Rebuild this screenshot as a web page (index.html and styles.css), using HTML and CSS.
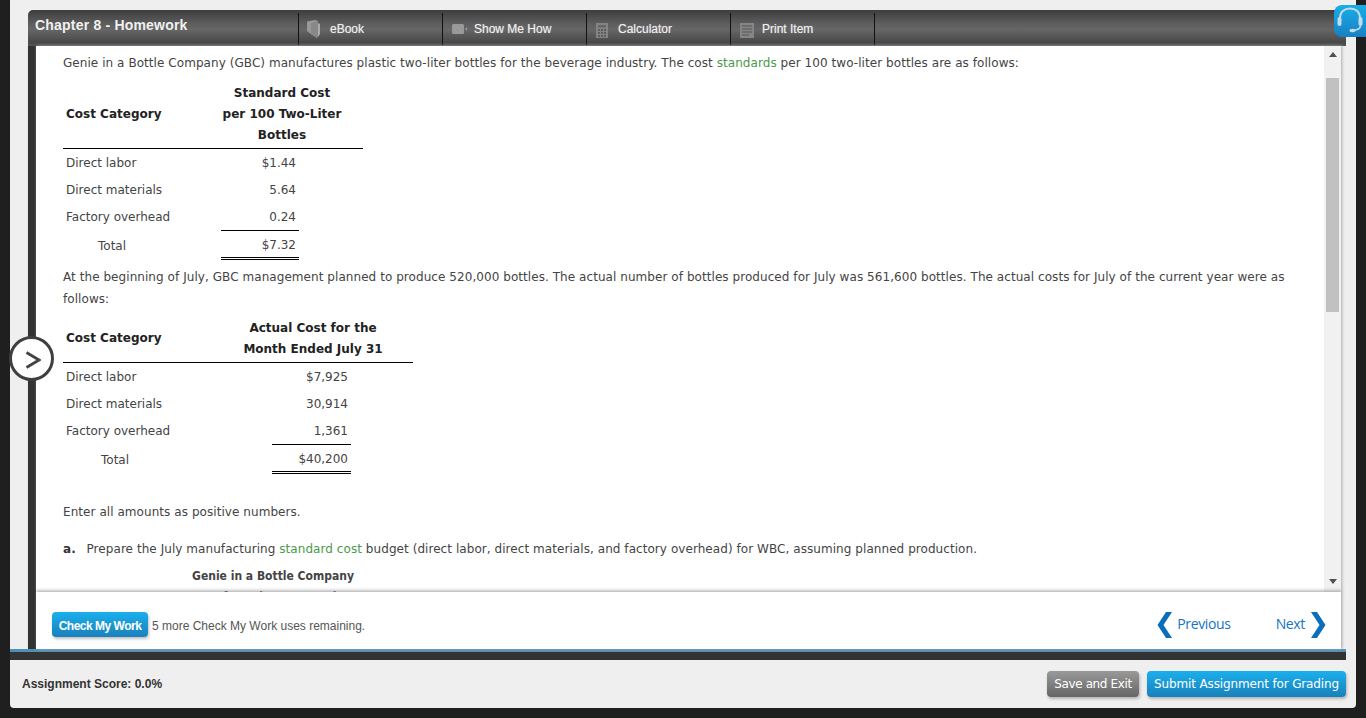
FILE: index.html
```html
<!DOCTYPE html>
<html lang="en">
<head>
<meta charset="utf-8">
<title>Chapter 8 - Homework</title>
<link rel="stylesheet" href="styles.css">
</head>
<body>
<div class="shell">
  <div class="window">
    <header class="header">
      <h1 class="title">Chapter 8 - Homework</h1>
      <nav class="tabs">
        <a class="tab"><svg class="ico" width="18" height="20" viewBox="0 0 18 20"><path d="M2 2.500 L10 1 L13 2 L13 16 L12 19 L6 15 L2 12 Z" fill="#999"/><path d="M6 4 L13 2 L13 16 L12 19 L6 15 Z" fill="#888"/><path d="M13 4 L15 5 L15 15 L13 18 Z" fill="#aaa"/></svg><span>eBook</span></a>
        <a class="tab"><svg class="ico" width="18" height="20" viewBox="0 0 18 20"><rect x="3" y="5" width="12" height="10" rx="1.500" fill="#999"/><path d="M16 10 L18 8.200 L18 11.800 Z" fill="#999"/></svg><span>Show Me How</span></a>
        <a class="tab"><svg class="ico" width="18" height="20" viewBox="0 0 18 20"><rect x="3" y="4" width="12" height="15" fill="#848484"/><rect x="5" y="6" width="8" height="2.500" fill="#666"/><path d="M5 10h2v2H5zM8 10h2v2H8zM11 10h2v2h-2zM5 13h2v2H5zM8 13h2v2H8zM11 13h2v2h-2zM5 16h2v2H5zM8 16h2v2H8zM11 16h2v2h-2z" fill="#5e5e5e"/></svg><span>Calculator</span></a>
        <a class="tab"><svg class="ico" width="18" height="20" viewBox="0 0 18 20"><rect x="3" y="4" width="14" height="15" fill="#858585"/><path d="M5 6.500h10v1H5zM5 9.500h10v1H5zM5 12.500h10v1H5zM5 15.500h7v1H5z" fill="#555"/></svg><span>Print Item</span></a>
      </nav>
    </header>
    <div class="stage">
      <div class="stripe"></div>
      <div class="main">
        <div class="pane">
          <div class="content">
            <p class="para">Genie in a Bottle Company (GBC) manufactures plastic two-liter bottles for the beverage industry. The cost <a class="term">standards</a> per 100 two-liter bottles are as follows:</p>
            <table class="fin fin-a">
              <colgroup><col class="a1"><col class="a2"><col class="a3"></colgroup>
              <thead><tr><th class="lbl">Cost Category</th><th colspan="2" class="hd hd-a">Standard Cost<br>per 100 Two-Liter<br>Bottles</th></tr></thead>
              <tbody>
                <tr><td>Direct labor</td><td class="num">$1.44</td><td></td></tr>
                <tr><td>Direct materials</td><td class="num">5.64</td><td></td></tr>
                <tr class="last"><td>Factory overhead</td><td class="num under">0.24</td><td></td></tr>
                <tr class="total"><td class="tot-a">Total</td><td class="num dbl">$7.32</td><td></td></tr>
              </tbody>
            </table>
            <p class="para para-b">At the beginning of July, GBC management planned to produce 520,000 bottles. The actual number of bottles produced for July was 561,600 bottles. The actual costs for July of the current year were as follows:</p>
            <table class="fin fin-b">
              <colgroup><col class="b1"><col class="b2"><col class="b3"><col class="b4"></colgroup>
              <thead><tr><th class="lbl">Cost Category</th><th colspan="3" class="hd hd-b">Actual Cost for the<br>Month Ended July 31</th></tr></thead>
              <tbody>
                <tr><td colspan="2">Direct labor</td><td class="num">$7,925</td><td></td></tr>
                <tr><td colspan="2">Direct materials</td><td class="num">30,914</td><td></td></tr>
                <tr class="last"><td colspan="2">Factory overhead</td><td class="num under">1,361</td><td></td></tr>
                <tr class="total"><td colspan="2" class="tot-b">Total</td><td class="num dbl">$40,200</td><td></td></tr>
              </tbody>
            </table>
            <p class="para para-c">Enter all amounts as positive numbers.</p>
            <p class="para para-d"><b class="mark">a.</b>&nbsp; Prepare the July manufacturing <a class="term">standard cost</a> budget (direct labor, direct materials, and factory overhead) for WBC, assuming planned production.</p>
            <div class="budget">Genie in a Bottle Company<br>Manufacturing Cost Budget</div>
          </div>
          <div class="scrollbar">
            <span class="arrow up"></span>
            <div class="track"><div class="thumb"></div></div>
            <span class="arrow down"></span>
          </div>
        </div>
        <div class="footer">
          <button class="btn btn-check">Check My Work</button>
          <span class="remain">5 more Check My Work uses remaining.</span>
          <div class="pager">
            <a class="page"><svg width="16" height="26" viewBox="0 0 16 26"><path d="M15 0 L9 0 L0.500 13 L9 26 L15 26 L6.500 13 Z" fill="#0a6ebd"/></svg><span>Previous</span></a>
            <a class="page page-next"><span>Next</span><svg width="16" height="26" viewBox="0 0 16 26"><path d="M1 0 L7 0 L15.500 13 L7 26 L1 26 L9.500 13 Z" fill="#0a6ebd"/></svg></a>
          </div>
        </div>
      </div>
    </div>
    <div class="rule"></div>
  </div>
  <div class="scorebar">
    <span class="score">Assignment Score: 0.0%</span>
    <div class="actions">
      <button class="btn btn-save">Save and Exit</button>
      <button class="btn btn-submit">Submit Assignment for Grading</button>
    </div>
  </div>
</div>
<button class="toggle" aria-label="Expand"><svg width="16" height="18" viewBox="0 0 16 18"><path d="M1.500 1.500 L14 9 L1.500 16.500" fill="none" stroke="#444" stroke-width="2.800"/></svg></button>
<div class="headset"><svg width="30" height="30" viewBox="0 0 30 30"><path d="M5 15 V12 C5 6 9 2.500 15 2.500 C21 2.500 25 6 25 12 V15" fill="none" stroke="#c4dcea" stroke-width="1.800"/><rect x="2.500" y="11" width="4" height="9" rx="2" fill="#c4dcea"/><rect x="23.500" y="11" width="4" height="9" rx="2" fill="#c4dcea"/><path d="M25.500 20 C25 22.500 22 24 19 24" fill="none" stroke="#c4dcea" stroke-width="1.500"/><ellipse cx="17.500" cy="24.500" rx="3" ry="1.800" fill="#c4dcea"/></svg></div>
</body>
</html>
```
FILE: styles.css
```css
* { box-sizing: border-box; }
html, body { margin: 0; height: 718px; overflow: hidden; }
body { background: #1f1f1f; position: relative; font-family: "DejaVu Sans", Verdana, sans-serif; }
.shell { margin-left: 10px; width: 1346px; height: 708px; background: #efefef; border-radius: 0 0 4px 4px; padding: 10px 0 0 18px; display: flex; flex-direction: column; }
.window { width: 1318px; height: 650px; display: flex; flex-direction: column; }
.header { height: 36px; flex: none; display: flex; border-radius: 5px 0 0 0; background: linear-gradient(#3d3d3d 0%, #5f5f5f 40%, #666 55%, #484848 90%, #555 100%); }
.title { margin: 0; width: 270px; padding: 7px 0 0 7px; font: bold 14px/16px "Liberation Sans", Arial, sans-serif; letter-spacing: .2px; color: #f0f0f0; }
.tabs { display: flex; padding-top: 3px; }
.tab { width: 144px; height: 32px; border-left: 1px solid #111; display: flex; align-items: center; color: #eee; font: 12px "Liberation Sans", Arial, sans-serif; padding-left: 6px; gap: 7px; text-shadow: 0 0 1px rgba(255,255,255,.5); }
.tab:last-child { width: 145px; border-right: 1px solid #111; }
.ico { flex: none; overflow: visible; }
.stage { flex: 1; display: flex; min-height: 0; }
.stripe { width: 8px; background: #333; box-shadow: 1px 0 2px #555; }
.main { flex: 1; display: flex; flex-direction: column; min-width: 0; background: #efefef; }
.pane { height: 546px; display: flex; background: #fff; margin-right: 5px; box-shadow: 1px 0 3px #aaa; position: relative; }
.content { width: 1288px; height: 546px; overflow: hidden; padding: 7px 25px 0 27px; color: #444; font-size: 12px; line-height: 21px; }
.para { margin: 0; letter-spacing: .06px; }
.para-b { margin-top: 6px; line-height: 22px; width: 1236px; }
.para-c { margin-top: 28px; }
.para-d { margin-top: 16px; }
.term { color: #4a9a4a; }
.mark { color: #333; margin-right: 3px; }
.fin { border-collapse: collapse; table-layout: fixed; margin-top: 9px; color: #444; font-size: 12px; }
.fin-a { width: 300px; }
.fin-b { width: 350px; margin-top: 8px; }
.a1 { width: 158px; }
.a2 { width: 78px; }
.a3 { width: 64px; }
.b1 { width: 180px; }
.b2 { width: 29px; }
.b3 { width: 79px; }
.b4 { width: 62px; }
.fin th { color: #222; font-weight: bold; line-height: 21px; border-bottom: 1px solid #000; padding: 0 0 2px; white-space: nowrap; }
.fin .lbl { text-align: left; padding-left: 3px; }
.fin-b .lbl { padding-bottom: 4px; }
.hd-a { padding-right: 20px !important; text-align: center; }
.hd-b { padding-right: 30px !important; text-align: center; }
.fin td { height: 27px; padding: 2px 0 0 3px; white-space: nowrap; }
.fin .num { text-align: right; padding: 2px 3px 0 0; }
.fin .under { border-bottom: 1px solid #000; }
.fin .dbl { border-bottom: 3px double #000; }
.fin .last td { height: 28px; padding-top: 2px; }
.fin .total td { height: 28px; padding-top: 3px; }
.fin .tot-a { padding-left: 35px; }
.fin .tot-b { padding-left: 38px; }
.budget { margin: 6px 0 0; width: 420px; text-align: center; font-weight: bold; font-stretch: condensed; color: #444; line-height: 21px; }
.scrollbar { width: 17px; background: #f1f1f1; display: flex; flex-direction: column; align-items: center; }
.arrow { width: 0; height: 0; border-left: 4px solid transparent; border-right: 4px solid transparent; flex: none; }
.arrow.up { border-bottom: 5px solid #505050; margin: 6px 0 21px; }
.arrow.down { border-top: 5px solid #505050; margin: 6px 0 8px; }
.track { flex: 1; width: 100%; padding: 0 2px; }
.thumb { height: 234px; background: #c1c1c1; }
.footer { height: 57px; display: flex; align-items: center; background: #fff; margin-right: 5px; padding: 8px 15px 0 16px; box-shadow: 1px 0 3px #aaa, 0 -2px 3px rgba(0,0,0,.2); position: relative; }
.btn { border: 0; border-radius: 4px; color: #fff; height: 26px; padding: 0; box-shadow: 1px 2px 3px rgba(0,0,0,.25); }
.btn-check { width: 96px; height: 25px; margin-right: 4px; padding-top: 2px; font: bold 12px "Liberation Sans", Arial, sans-serif; letter-spacing: -.5px; background: linear-gradient(#1ab0ec, #1a80bb); }
.remain { font: 12px "Liberation Sans", Arial, sans-serif; color: #555; margin-top: 2px; }
.pager { margin-left: auto; display: flex; gap: 45px; }
.page { display: flex; align-items: center; gap: 4px; color: #1474c4; font: 14px "Open Sans", sans-serif; letter-spacing: -.35px; }
.page span { margin-top: -2px; }
.page-next { gap: 5px; }
.rule { height: 11px; flex: none; margin-left: -18px; background: linear-gradient(#4f8fba 0, #4f8fba 3px, #333 3px, #333 100%); }
.scorebar { flex: 1; display: flex; align-items: center; justify-content: space-between; margin-left: -6px; margin-right: 10px; }
.score { font: bold 12px "Liberation Sans", Arial, sans-serif; color: #333; }
.actions { display: flex; gap: 8px; }
.btn-save { width: 92px; font: 12px "DejaVu Sans", sans-serif; letter-spacing: -.38px; background: linear-gradient(#999, #666); }
.btn-submit { width: 199px; font: 12px "DejaVu Sans", sans-serif; letter-spacing: -.14px; background: linear-gradient(#1ab0ec, #1a80bb); }
.toggle { position: absolute; left: 9px; top: 336px; width: 45px; height: 45px; border-radius: 50%; border: 3px solid #3f3f3f; background: #fff; padding: 3px 0 0 3px; display: flex; align-items: center; justify-content: center; }
.headset { position: absolute; left: 1334px; top: 5px; width: 32px; height: 32px; background: linear-gradient(#18aee8, #1880c4); border-radius: 8px 0 0 8px; display: flex; align-items: center; justify-content: center; }
```
